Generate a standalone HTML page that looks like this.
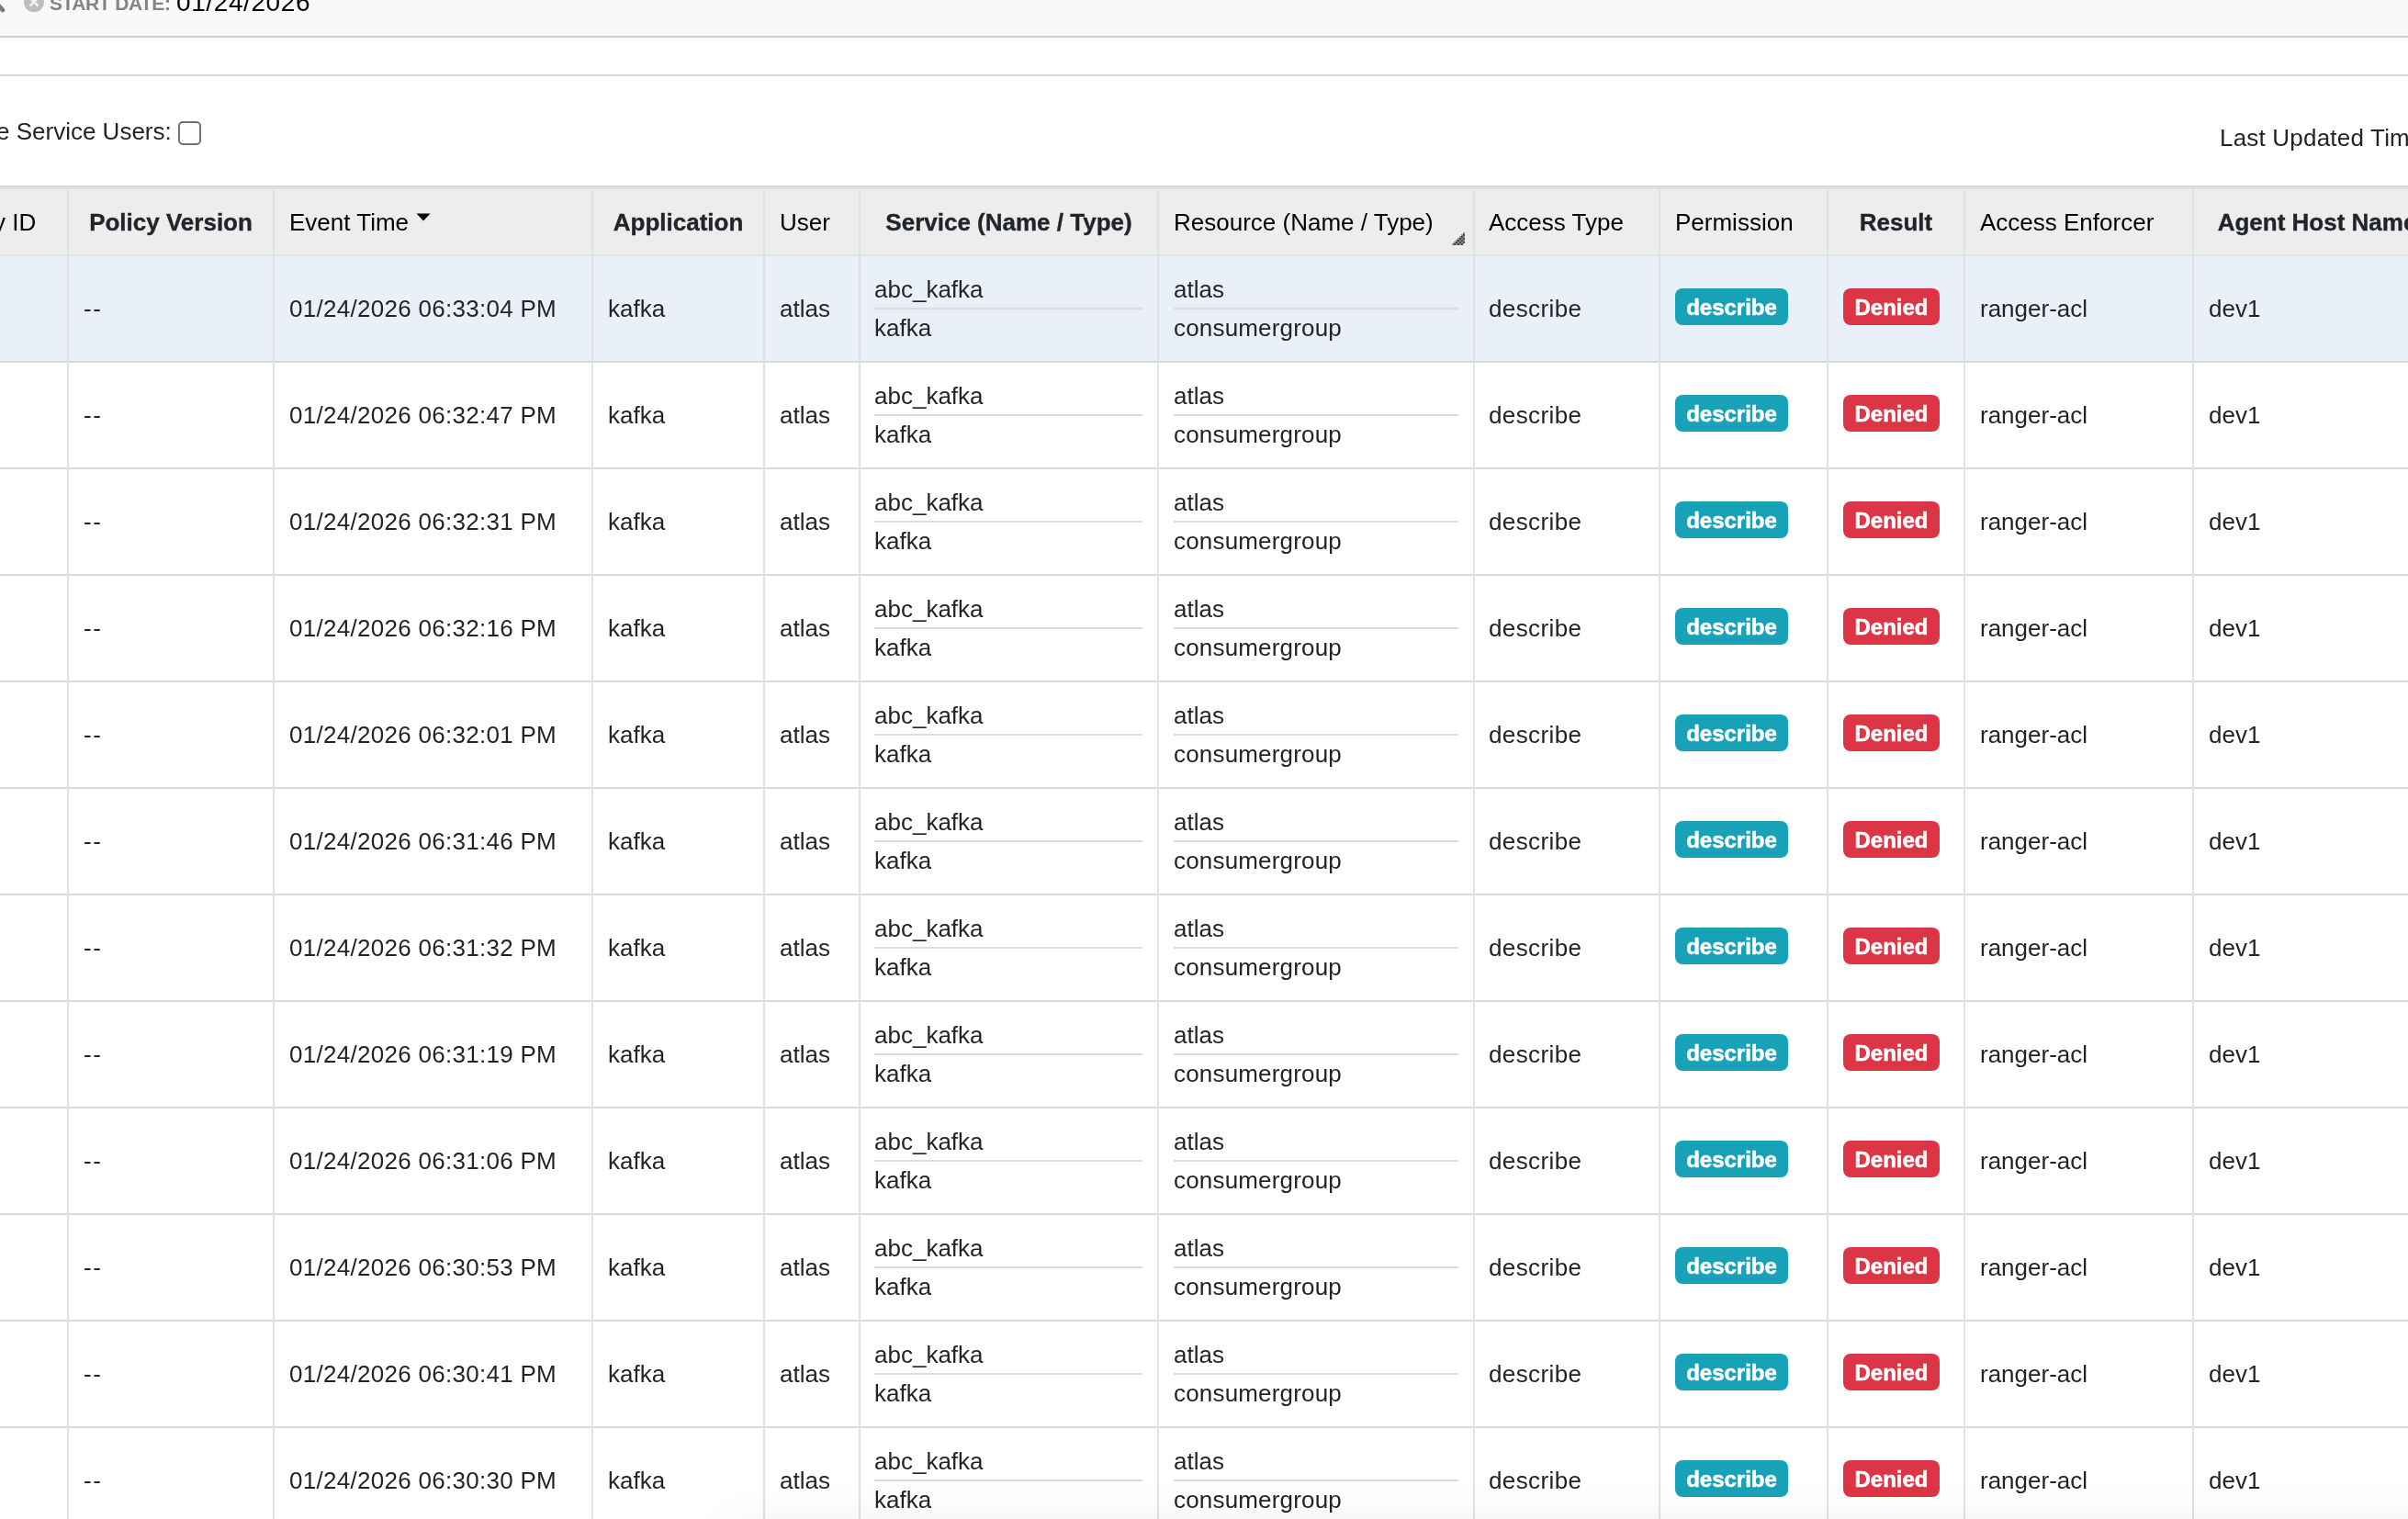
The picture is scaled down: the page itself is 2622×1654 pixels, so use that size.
<!DOCTYPE html>
<html><head><meta charset="utf-8"><style>
html,body{margin:0;padding:0;width:2622px;height:1654px;overflow:hidden;background:#fff;position:relative}
body{will-change:transform}
.t{position:absolute;font-family:"Liberation Sans",sans-serif;font-size:26px;line-height:30px;white-space:nowrap;color:#212529}
.hn{color:#000}
.hb{font-weight:700;color:#212529;-webkit-text-stroke:0.35px #212529}
.bd{position:absolute;height:40px;line-height:41px;border-radius:8px;color:#fff;font-family:"Liberation Sans",sans-serif;font-size:24px;font-weight:700;text-align:center;white-space:nowrap;-webkit-text-stroke:0.5px #fff}
</style></head><body>
<div style="position:absolute;left:0;top:0;width:2622px;height:39px;background:#f9f9f9"></div>
<div style="position:absolute;left:0;top:39px;width:2622px;height:2px;background:#cbcbcb"></div>
<div style="position:absolute;left:0;top:81px;width:2622px;height:2px;background:#d6d6d6"></div>
<svg style="position:absolute;left:0;top:0" width="12" height="20"><line x1="-4" y1="3" x2="3" y2="11" stroke="#787878" stroke-width="4.5" stroke-linecap="round"/></svg>
<svg style="position:absolute;left:24px;top:0" width="26" height="16"><circle cx="13" cy="2.2" r="11" fill="#bcbdbf"/><path d="M8.5 -2.3 L17.5 6.7 M17.5 -2.3 L8.5 6.7" stroke="#f4f4f4" stroke-width="2.4"/></svg>
<div class="t" style="left:54px;top:-11px;font-size:21px;font-weight:700;color:#838383;letter-spacing:-0.5px">START DATE:</div>
<div class="t" style="left:192px;top:-12px;font-size:28px;color:#000;letter-spacing:0.6px">01/24/2026</div>
<div class="t" style="left:-4px;top:128px;color:#212529">e Service Users:</div>
<div style="position:absolute;left:194px;top:132px;width:21px;height:22px;border:2px solid #727272;border-radius:5px;background:#fff"></div>
<div class="t" style="left:2417px;top:135px;color:#212529;letter-spacing:0.2px">Last Updated Time: 01/24/2026 06:33:10 PM</div>
<div style="position:absolute;left:0;top:202px;width:2622px;height:2px;background:#d9d9d9"></div>
<div style="position:absolute;left:0;top:204px;width:2622px;height:2px;background:#dee2e6"></div>
<div style="position:absolute;left:0;top:206px;width:2622px;height:71px;background:#ededed"></div>
<div style="position:absolute;left:0;top:277px;width:2622px;height:2px;background:#dee2e6"></div>
<div style="position:absolute;left:0;top:279px;width:2622px;height:114px;background:#e9f0fa"></div>
<div style="position:absolute;left:0;top:393px;width:2622px;height:2px;background:#d9d9d9"></div>
<div style="position:absolute;left:0;top:509px;width:2622px;height:2px;background:#d9d9d9"></div>
<div style="position:absolute;left:0;top:625px;width:2622px;height:2px;background:#d9d9d9"></div>
<div style="position:absolute;left:0;top:741px;width:2622px;height:2px;background:#d9d9d9"></div>
<div style="position:absolute;left:0;top:857px;width:2622px;height:2px;background:#d9d9d9"></div>
<div style="position:absolute;left:0;top:973px;width:2622px;height:2px;background:#d9d9d9"></div>
<div style="position:absolute;left:0;top:1089px;width:2622px;height:2px;background:#d9d9d9"></div>
<div style="position:absolute;left:0;top:1205px;width:2622px;height:2px;background:#d9d9d9"></div>
<div style="position:absolute;left:0;top:1321px;width:2622px;height:2px;background:#d9d9d9"></div>
<div style="position:absolute;left:0;top:1437px;width:2622px;height:2px;background:#d9d9d9"></div>
<div style="position:absolute;left:0;top:1553px;width:2622px;height:2px;background:#d9d9d9"></div>
<div style="position:absolute;left:0;top:1669px;width:2622px;height:2px;background:#d9d9d9"></div>
<div style="position:absolute;left:73px;top:204px;width:2px;height:1460px;background:#dee2e6"></div>
<div style="position:absolute;left:297px;top:204px;width:2px;height:1460px;background:#dee2e6"></div>
<div style="position:absolute;left:644px;top:204px;width:2px;height:1460px;background:#dee2e6"></div>
<div style="position:absolute;left:831px;top:204px;width:2px;height:1460px;background:#dee2e6"></div>
<div style="position:absolute;left:935px;top:204px;width:2px;height:1460px;background:#dee2e6"></div>
<div style="position:absolute;left:1260px;top:204px;width:2px;height:1460px;background:#dee2e6"></div>
<div style="position:absolute;left:1604px;top:204px;width:2px;height:1460px;background:#dee2e6"></div>
<div style="position:absolute;left:1806px;top:204px;width:2px;height:1460px;background:#dee2e6"></div>
<div style="position:absolute;left:1989px;top:204px;width:2px;height:1460px;background:#dee2e6"></div>
<div style="position:absolute;left:2138px;top:204px;width:2px;height:1460px;background:#dee2e6"></div>
<div style="position:absolute;left:2387px;top:204px;width:2px;height:1460px;background:#dee2e6"></div>
<div class="t hn" style="left:-7px;top:227px;">y ID</div>
<div class="t hb" style="left:75px;top:227px;width:222px;text-align:center">Policy Version</div>
<div class="t hn" style="left:315px;top:227px;">Event Time</div>
<svg style="position:absolute;left:453px;top:232px" width="16" height="10"><path d="M0.5 0.5 L15.5 0.5 L8 8.5 Z" fill="#000"/></svg>
<div class="t hb" style="left:646px;top:227px;width:185px;text-align:center">Application</div>
<div class="t hn" style="left:849px;top:227px;">User</div>
<div class="t hb" style="left:937px;top:227px;width:323px;text-align:center">Service (Name / Type)</div>
<div class="t hn" style="left:1278px;top:227px;">Resource (Name / Type)</div>
<svg style="position:absolute;left:1579px;top:253px" width="17" height="16"><rect x="14" y="0" width="2" height="2" fill="#8c8c8c"/><rect x="12" y="2" width="2" height="2" fill="#8c8c8c"/><rect x="14" y="2" width="2" height="2" fill="#474747"/><rect x="10" y="4" width="2" height="2" fill="#8c8c8c"/><rect x="12" y="4" width="2" height="2" fill="#474747"/><rect x="14" y="4" width="2" height="2" fill="#8c8c8c"/><rect x="8" y="6" width="2" height="2" fill="#8c8c8c"/><rect x="10" y="6" width="2" height="2" fill="#474747"/><rect x="12" y="6" width="2" height="2" fill="#8c8c8c"/><rect x="14" y="6" width="2" height="2" fill="#474747"/><rect x="6" y="8" width="2" height="2" fill="#8c8c8c"/><rect x="8" y="8" width="2" height="2" fill="#474747"/><rect x="10" y="8" width="2" height="2" fill="#8c8c8c"/><rect x="12" y="8" width="2" height="2" fill="#474747"/><rect x="14" y="8" width="2" height="2" fill="#8c8c8c"/><rect x="4" y="10" width="2" height="2" fill="#8c8c8c"/><rect x="6" y="10" width="2" height="2" fill="#474747"/><rect x="8" y="10" width="2" height="2" fill="#8c8c8c"/><rect x="10" y="10" width="2" height="2" fill="#474747"/><rect x="12" y="10" width="2" height="2" fill="#8c8c8c"/><rect x="14" y="10" width="2" height="2" fill="#474747"/><rect x="2" y="12" width="2" height="2" fill="#8c8c8c"/><rect x="4" y="12" width="2" height="2" fill="#474747"/><rect x="6" y="12" width="2" height="2" fill="#8c8c8c"/><rect x="8" y="12" width="2" height="2" fill="#474747"/><rect x="10" y="12" width="2" height="2" fill="#8c8c8c"/><rect x="12" y="12" width="2" height="2" fill="#474747"/></svg>
<div class="t hn" style="left:1621px;top:227px;">Access Type</div>
<div class="t hn" style="left:1824px;top:227px;">Permission</div>
<div class="t hb" style="left:1991px;top:227px;width:147px;text-align:center">Result</div>
<div class="t hn" style="left:2156px;top:227px;">Access Enforcer</div>
<div class="t hb" style="left:2389px;top:227px;width:268px;text-align:center">Agent Host Name</div>
<div class="t" style="left:91px;top:321px;letter-spacing:1.5px">--</div>
<div class="t" style="left:315px;top:321px;letter-spacing:0.28px">01/24/2026 06:33:04 PM</div>
<div class="t" style="left:662px;top:321px;">kafka</div>
<div class="t" style="left:849px;top:321px;">atlas</div>
<div class="t" style="left:1621px;top:321px;letter-spacing:0.4px">describe</div>
<div class="t" style="left:2156px;top:321px;">ranger-acl</div>
<div class="t" style="left:2405px;top:321px;">dev1</div>
<div class="t" style="left:952px;top:300px;">abc_kafka</div>
<div style="position:absolute;left:952px;top:335px;width:292px;height:2px;background:#dcdcdc"></div>
<div class="t" style="left:952px;top:342px;">kafka</div>
<div class="t" style="left:1278px;top:300px;">atlas</div>
<div style="position:absolute;left:1278px;top:335px;width:310px;height:2px;background:#dcdcdc"></div>
<div class="t" style="left:1278px;top:342px;letter-spacing:0.18px">consumergroup</div>
<div class="bd" style="left:1824px;top:314px;width:123px;background:#17a2b8">describe</div>
<div class="bd" style="left:2007px;top:314px;width:105px;background:#dc3545">Denied</div>
<div class="t" style="left:91px;top:437px;letter-spacing:1.5px">--</div>
<div class="t" style="left:315px;top:437px;letter-spacing:0.28px">01/24/2026 06:32:47 PM</div>
<div class="t" style="left:662px;top:437px;">kafka</div>
<div class="t" style="left:849px;top:437px;">atlas</div>
<div class="t" style="left:1621px;top:437px;letter-spacing:0.4px">describe</div>
<div class="t" style="left:2156px;top:437px;">ranger-acl</div>
<div class="t" style="left:2405px;top:437px;">dev1</div>
<div class="t" style="left:952px;top:416px;">abc_kafka</div>
<div style="position:absolute;left:952px;top:451px;width:292px;height:2px;background:#dcdcdc"></div>
<div class="t" style="left:952px;top:458px;">kafka</div>
<div class="t" style="left:1278px;top:416px;">atlas</div>
<div style="position:absolute;left:1278px;top:451px;width:310px;height:2px;background:#dcdcdc"></div>
<div class="t" style="left:1278px;top:458px;letter-spacing:0.18px">consumergroup</div>
<div class="bd" style="left:1824px;top:430px;width:123px;background:#17a2b8">describe</div>
<div class="bd" style="left:2007px;top:430px;width:105px;background:#dc3545">Denied</div>
<div class="t" style="left:91px;top:553px;letter-spacing:1.5px">--</div>
<div class="t" style="left:315px;top:553px;letter-spacing:0.28px">01/24/2026 06:32:31 PM</div>
<div class="t" style="left:662px;top:553px;">kafka</div>
<div class="t" style="left:849px;top:553px;">atlas</div>
<div class="t" style="left:1621px;top:553px;letter-spacing:0.4px">describe</div>
<div class="t" style="left:2156px;top:553px;">ranger-acl</div>
<div class="t" style="left:2405px;top:553px;">dev1</div>
<div class="t" style="left:952px;top:532px;">abc_kafka</div>
<div style="position:absolute;left:952px;top:567px;width:292px;height:2px;background:#dcdcdc"></div>
<div class="t" style="left:952px;top:574px;">kafka</div>
<div class="t" style="left:1278px;top:532px;">atlas</div>
<div style="position:absolute;left:1278px;top:567px;width:310px;height:2px;background:#dcdcdc"></div>
<div class="t" style="left:1278px;top:574px;letter-spacing:0.18px">consumergroup</div>
<div class="bd" style="left:1824px;top:546px;width:123px;background:#17a2b8">describe</div>
<div class="bd" style="left:2007px;top:546px;width:105px;background:#dc3545">Denied</div>
<div class="t" style="left:91px;top:669px;letter-spacing:1.5px">--</div>
<div class="t" style="left:315px;top:669px;letter-spacing:0.28px">01/24/2026 06:32:16 PM</div>
<div class="t" style="left:662px;top:669px;">kafka</div>
<div class="t" style="left:849px;top:669px;">atlas</div>
<div class="t" style="left:1621px;top:669px;letter-spacing:0.4px">describe</div>
<div class="t" style="left:2156px;top:669px;">ranger-acl</div>
<div class="t" style="left:2405px;top:669px;">dev1</div>
<div class="t" style="left:952px;top:648px;">abc_kafka</div>
<div style="position:absolute;left:952px;top:683px;width:292px;height:2px;background:#dcdcdc"></div>
<div class="t" style="left:952px;top:690px;">kafka</div>
<div class="t" style="left:1278px;top:648px;">atlas</div>
<div style="position:absolute;left:1278px;top:683px;width:310px;height:2px;background:#dcdcdc"></div>
<div class="t" style="left:1278px;top:690px;letter-spacing:0.18px">consumergroup</div>
<div class="bd" style="left:1824px;top:662px;width:123px;background:#17a2b8">describe</div>
<div class="bd" style="left:2007px;top:662px;width:105px;background:#dc3545">Denied</div>
<div class="t" style="left:91px;top:785px;letter-spacing:1.5px">--</div>
<div class="t" style="left:315px;top:785px;letter-spacing:0.28px">01/24/2026 06:32:01 PM</div>
<div class="t" style="left:662px;top:785px;">kafka</div>
<div class="t" style="left:849px;top:785px;">atlas</div>
<div class="t" style="left:1621px;top:785px;letter-spacing:0.4px">describe</div>
<div class="t" style="left:2156px;top:785px;">ranger-acl</div>
<div class="t" style="left:2405px;top:785px;">dev1</div>
<div class="t" style="left:952px;top:764px;">abc_kafka</div>
<div style="position:absolute;left:952px;top:799px;width:292px;height:2px;background:#dcdcdc"></div>
<div class="t" style="left:952px;top:806px;">kafka</div>
<div class="t" style="left:1278px;top:764px;">atlas</div>
<div style="position:absolute;left:1278px;top:799px;width:310px;height:2px;background:#dcdcdc"></div>
<div class="t" style="left:1278px;top:806px;letter-spacing:0.18px">consumergroup</div>
<div class="bd" style="left:1824px;top:778px;width:123px;background:#17a2b8">describe</div>
<div class="bd" style="left:2007px;top:778px;width:105px;background:#dc3545">Denied</div>
<div class="t" style="left:91px;top:901px;letter-spacing:1.5px">--</div>
<div class="t" style="left:315px;top:901px;letter-spacing:0.28px">01/24/2026 06:31:46 PM</div>
<div class="t" style="left:662px;top:901px;">kafka</div>
<div class="t" style="left:849px;top:901px;">atlas</div>
<div class="t" style="left:1621px;top:901px;letter-spacing:0.4px">describe</div>
<div class="t" style="left:2156px;top:901px;">ranger-acl</div>
<div class="t" style="left:2405px;top:901px;">dev1</div>
<div class="t" style="left:952px;top:880px;">abc_kafka</div>
<div style="position:absolute;left:952px;top:915px;width:292px;height:2px;background:#dcdcdc"></div>
<div class="t" style="left:952px;top:922px;">kafka</div>
<div class="t" style="left:1278px;top:880px;">atlas</div>
<div style="position:absolute;left:1278px;top:915px;width:310px;height:2px;background:#dcdcdc"></div>
<div class="t" style="left:1278px;top:922px;letter-spacing:0.18px">consumergroup</div>
<div class="bd" style="left:1824px;top:894px;width:123px;background:#17a2b8">describe</div>
<div class="bd" style="left:2007px;top:894px;width:105px;background:#dc3545">Denied</div>
<div class="t" style="left:91px;top:1017px;letter-spacing:1.5px">--</div>
<div class="t" style="left:315px;top:1017px;letter-spacing:0.28px">01/24/2026 06:31:32 PM</div>
<div class="t" style="left:662px;top:1017px;">kafka</div>
<div class="t" style="left:849px;top:1017px;">atlas</div>
<div class="t" style="left:1621px;top:1017px;letter-spacing:0.4px">describe</div>
<div class="t" style="left:2156px;top:1017px;">ranger-acl</div>
<div class="t" style="left:2405px;top:1017px;">dev1</div>
<div class="t" style="left:952px;top:996px;">abc_kafka</div>
<div style="position:absolute;left:952px;top:1031px;width:292px;height:2px;background:#dcdcdc"></div>
<div class="t" style="left:952px;top:1038px;">kafka</div>
<div class="t" style="left:1278px;top:996px;">atlas</div>
<div style="position:absolute;left:1278px;top:1031px;width:310px;height:2px;background:#dcdcdc"></div>
<div class="t" style="left:1278px;top:1038px;letter-spacing:0.18px">consumergroup</div>
<div class="bd" style="left:1824px;top:1010px;width:123px;background:#17a2b8">describe</div>
<div class="bd" style="left:2007px;top:1010px;width:105px;background:#dc3545">Denied</div>
<div class="t" style="left:91px;top:1133px;letter-spacing:1.5px">--</div>
<div class="t" style="left:315px;top:1133px;letter-spacing:0.28px">01/24/2026 06:31:19 PM</div>
<div class="t" style="left:662px;top:1133px;">kafka</div>
<div class="t" style="left:849px;top:1133px;">atlas</div>
<div class="t" style="left:1621px;top:1133px;letter-spacing:0.4px">describe</div>
<div class="t" style="left:2156px;top:1133px;">ranger-acl</div>
<div class="t" style="left:2405px;top:1133px;">dev1</div>
<div class="t" style="left:952px;top:1112px;">abc_kafka</div>
<div style="position:absolute;left:952px;top:1147px;width:292px;height:2px;background:#dcdcdc"></div>
<div class="t" style="left:952px;top:1154px;">kafka</div>
<div class="t" style="left:1278px;top:1112px;">atlas</div>
<div style="position:absolute;left:1278px;top:1147px;width:310px;height:2px;background:#dcdcdc"></div>
<div class="t" style="left:1278px;top:1154px;letter-spacing:0.18px">consumergroup</div>
<div class="bd" style="left:1824px;top:1126px;width:123px;background:#17a2b8">describe</div>
<div class="bd" style="left:2007px;top:1126px;width:105px;background:#dc3545">Denied</div>
<div class="t" style="left:91px;top:1249px;letter-spacing:1.5px">--</div>
<div class="t" style="left:315px;top:1249px;letter-spacing:0.28px">01/24/2026 06:31:06 PM</div>
<div class="t" style="left:662px;top:1249px;">kafka</div>
<div class="t" style="left:849px;top:1249px;">atlas</div>
<div class="t" style="left:1621px;top:1249px;letter-spacing:0.4px">describe</div>
<div class="t" style="left:2156px;top:1249px;">ranger-acl</div>
<div class="t" style="left:2405px;top:1249px;">dev1</div>
<div class="t" style="left:952px;top:1228px;">abc_kafka</div>
<div style="position:absolute;left:952px;top:1263px;width:292px;height:2px;background:#dcdcdc"></div>
<div class="t" style="left:952px;top:1270px;">kafka</div>
<div class="t" style="left:1278px;top:1228px;">atlas</div>
<div style="position:absolute;left:1278px;top:1263px;width:310px;height:2px;background:#dcdcdc"></div>
<div class="t" style="left:1278px;top:1270px;letter-spacing:0.18px">consumergroup</div>
<div class="bd" style="left:1824px;top:1242px;width:123px;background:#17a2b8">describe</div>
<div class="bd" style="left:2007px;top:1242px;width:105px;background:#dc3545">Denied</div>
<div class="t" style="left:91px;top:1365px;letter-spacing:1.5px">--</div>
<div class="t" style="left:315px;top:1365px;letter-spacing:0.28px">01/24/2026 06:30:53 PM</div>
<div class="t" style="left:662px;top:1365px;">kafka</div>
<div class="t" style="left:849px;top:1365px;">atlas</div>
<div class="t" style="left:1621px;top:1365px;letter-spacing:0.4px">describe</div>
<div class="t" style="left:2156px;top:1365px;">ranger-acl</div>
<div class="t" style="left:2405px;top:1365px;">dev1</div>
<div class="t" style="left:952px;top:1344px;">abc_kafka</div>
<div style="position:absolute;left:952px;top:1379px;width:292px;height:2px;background:#dcdcdc"></div>
<div class="t" style="left:952px;top:1386px;">kafka</div>
<div class="t" style="left:1278px;top:1344px;">atlas</div>
<div style="position:absolute;left:1278px;top:1379px;width:310px;height:2px;background:#dcdcdc"></div>
<div class="t" style="left:1278px;top:1386px;letter-spacing:0.18px">consumergroup</div>
<div class="bd" style="left:1824px;top:1358px;width:123px;background:#17a2b8">describe</div>
<div class="bd" style="left:2007px;top:1358px;width:105px;background:#dc3545">Denied</div>
<div class="t" style="left:91px;top:1481px;letter-spacing:1.5px">--</div>
<div class="t" style="left:315px;top:1481px;letter-spacing:0.28px">01/24/2026 06:30:41 PM</div>
<div class="t" style="left:662px;top:1481px;">kafka</div>
<div class="t" style="left:849px;top:1481px;">atlas</div>
<div class="t" style="left:1621px;top:1481px;letter-spacing:0.4px">describe</div>
<div class="t" style="left:2156px;top:1481px;">ranger-acl</div>
<div class="t" style="left:2405px;top:1481px;">dev1</div>
<div class="t" style="left:952px;top:1460px;">abc_kafka</div>
<div style="position:absolute;left:952px;top:1495px;width:292px;height:2px;background:#dcdcdc"></div>
<div class="t" style="left:952px;top:1502px;">kafka</div>
<div class="t" style="left:1278px;top:1460px;">atlas</div>
<div style="position:absolute;left:1278px;top:1495px;width:310px;height:2px;background:#dcdcdc"></div>
<div class="t" style="left:1278px;top:1502px;letter-spacing:0.18px">consumergroup</div>
<div class="bd" style="left:1824px;top:1474px;width:123px;background:#17a2b8">describe</div>
<div class="bd" style="left:2007px;top:1474px;width:105px;background:#dc3545">Denied</div>
<div class="t" style="left:91px;top:1597px;letter-spacing:1.5px">--</div>
<div class="t" style="left:315px;top:1597px;letter-spacing:0.28px">01/24/2026 06:30:30 PM</div>
<div class="t" style="left:662px;top:1597px;">kafka</div>
<div class="t" style="left:849px;top:1597px;">atlas</div>
<div class="t" style="left:1621px;top:1597px;letter-spacing:0.4px">describe</div>
<div class="t" style="left:2156px;top:1597px;">ranger-acl</div>
<div class="t" style="left:2405px;top:1597px;">dev1</div>
<div class="t" style="left:952px;top:1576px;">abc_kafka</div>
<div style="position:absolute;left:952px;top:1611px;width:292px;height:2px;background:#dcdcdc"></div>
<div class="t" style="left:952px;top:1618px;">kafka</div>
<div class="t" style="left:1278px;top:1576px;">atlas</div>
<div style="position:absolute;left:1278px;top:1611px;width:310px;height:2px;background:#dcdcdc"></div>
<div class="t" style="left:1278px;top:1618px;letter-spacing:0.18px">consumergroup</div>
<div class="bd" style="left:1824px;top:1590px;width:123px;background:#17a2b8">describe</div>
<div class="bd" style="left:2007px;top:1590px;width:105px;background:#dc3545">Denied</div>
<div style="position:absolute;left:800px;top:1670px;width:2200px;height:100px;background:#fff;box-shadow:0 0 60px rgba(0,0,0,0.10)"></div>
</body></html>
